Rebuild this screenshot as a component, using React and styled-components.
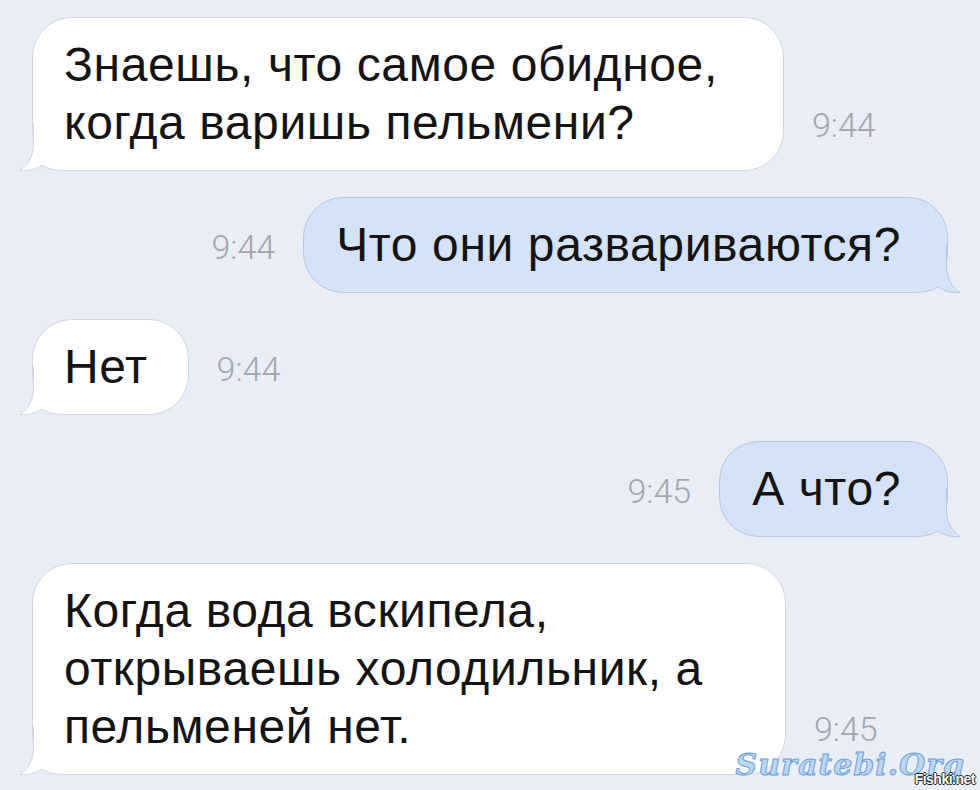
import React from "react";
import styled, { createGlobalStyle } from "styled-components";

const GlobalStyle = createGlobalStyle`
  html, body {
    margin: 0;
    padding: 0;
    background: #e9eef6;
  }
`;

const messages = [
  { id: 1, out: false, time: "9:44", width: 752, lines: ["Знаешь, что самое обидное,", "когда варишь пельмени?"] },
  { id: 2, out: true, time: "9:44", lines: ["Что они развариваются?"] },
  { id: 3, out: false, time: "9:44", lines: ["Нет"] },
  { id: 4, out: true, time: "9:45", lines: ["А что?"] },
  {
    id: 5,
    out: false,
    time: "9:45",
    width: 754,
    lines: ["Когда вода вскипела,", "открываешь холодильник, а", "пельменей нет."],
  },
];

const Tail = ({ out }) => (
  <TailSvg out={out} width="60" height="48" viewBox="0 0 60 48">
    <path
      d="M14.5,0 L14.5,20 C14.5,34 9,42 1,47.5 C9,48.5 17,46 23,42 C30,46.5 38,47.5 48,47.5 L60,47.5 L60,0 Z"
      fill={out ? "#d4e3f7" : "#ffffff"}
    />
    <path
      d="M14.5,0 L14.5,20 C14.5,34 9,42 1,47.5 C9,48.5 17,46 23,42 C30,46.5 38,47.5 48,47.5 L60,47.5"
      fill="none"
      stroke={out ? "#b8c8dd" : "#d2d7de"}
      strokeWidth="1"
    />
  </TailSvg>
);

export default function App() {
  return (
    <>
      <GlobalStyle />
      <Screen>
        {messages.map((m) => (
          <Row key={m.id} out={m.out}>
            {m.out && <Time>{m.time}</Time>}
            <Bubble out={m.out} width={m.width}>
              <Tail out={m.out} />
              <Text>
                {m.lines.map((l, i) => (
                  <div key={i}>{l}</div>
                ))}
              </Text>
            </Bubble>
            {!m.out && <Time>{m.time}</Time>}
          </Row>
        ))}
        <Watermark>Suratebi.Org</Watermark>
        <Credit>Fishki.net</Credit>
      </Screen>
    </>
  );
}

const Screen = styled.div`
  position: relative;
  box-sizing: border-box;
  width: 980px;
  height: 790px;
  overflow: hidden;
  padding: 17px 32px 0;
  display: flex;
  flex-direction: column;
  gap: 26px;
  background: #e9eef6;
`;

const Row = styled.div`
  display: flex;
  align-items: flex-end;
  justify-content: ${(p) => (p.out ? "flex-end" : "flex-start")};
  gap: 28px;
`;

const Bubble = styled.div`
  position: relative;
  box-sizing: border-box;
  width: ${(p) => (p.width ? `${p.width}px` : "auto")};
  padding: ${(p) => (p.out ? "18px 46px 18px 32px" : "18px 40px 18px 31px")};
  border-radius: 40px;
  background: ${(p) => (p.out ? "#d4e3f7" : "#ffffff")};
  border: 1px solid ${(p) => (p.out ? "#b8c8dd" : "#d2d7de")};
  font-family: "Liberation Sans", Arial, Helvetica, sans-serif;
  font-size: 48px;
  line-height: 58px;
  letter-spacing: 0.6px;
  color: #141414;
  white-space: nowrap;
`;

const TailSvg = styled.svg`
  position: absolute;
  bottom: -1px;
  ${(p) => (p.out ? "right: -14px; transform: scaleX(-1);" : "left: -14px;")}
`;

const Text = styled.div`
  position: relative;
  z-index: 1;
`;

const Time = styled.div`
  font-family: Roboto, "Liberation Sans", sans-serif;
  font-weight: 300;
  font-size: 34px;
  line-height: 34px;
  color: #a2a6ac;
  margin-bottom: 29px;
`;

const Watermark = styled.div`
  position: absolute;
  right: 15px;
  bottom: 8px;
  font-family: "DejaVu Serif", serif;
  font-style: italic;
  font-weight: bold;
  font-size: 30px;
  letter-spacing: 1px;
  color: #bcd6f2;
  -webkit-text-stroke: 1px #6f9fd6;
`;

const Credit = styled.div`
  position: absolute;
  right: 5px;
  bottom: 3px;
  font-family: "Liberation Sans", Arial, sans-serif;
  font-weight: bold;
  font-size: 14px;
  letter-spacing: -0.5px;
  color: #ffffff;
  text-shadow: -1px 0 #222, 1px 0 #222, 0 -1px #222, 0 1px #222;
`;
